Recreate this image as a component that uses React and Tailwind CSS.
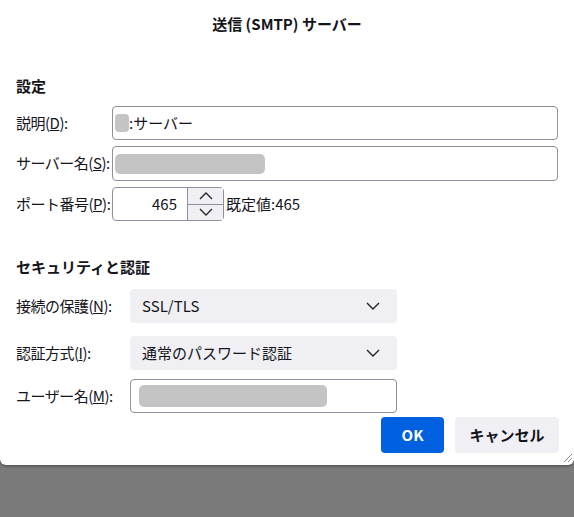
const F = { fontFamily: '"Noto Sans CJK JP", "Noto Sans", sans-serif' };
const Chev = () => (
  <svg width="14" height="8" viewBox="0 0 14 8"><path d="M1 1l6 6 6-6" fill="none" stroke="#222" strokeWidth="1.4" /></svg>
);
const Sel = ({ t }) => (
  <div className="h-[34px] w-[267px] rounded bg-[#f0f0f4] flex items-center justify-between pl-[12px] pr-[17px]">
    <span>{t}</span><Chev />
  </div>
);
export default function App() {
  return (
    <div style={F} className="w-[574px] h-[517px] bg-[#7a7a7a] text-[15px] text-[#15141a] relative overflow-hidden">
      <div className="bg-white h-[465px] rounded-b-[6px] shadow-[0_1px_3px_rgba(0,0,0,0.4)] relative">
        <div className="h-[48px] flex items-center justify-center font-semibold text-[15px] pt-[1px]">送信 (SMTP) サーバー</div>
        <div className="px-[16px]">
          <div className="font-semibold mt-[27px] h-[22px] leading-[22px]">設定</div>
          <div className="flex items-center mt-[9px] h-[34px]">
            <span className="w-[96px] shrink-0 whitespace-nowrap tracking-[-0.5px]">説明(<u>D</u>):</span>
            <div className="flex-1 h-[34px] border border-[#8f8f9d] rounded flex items-center pl-[2px]">
              <span className="w-[14px] h-[18px] bg-[#c4c4c4] rounded-sm"></span>
              <span>:サーバー</span>
            </div>
          </div>
          <div className="flex items-center mt-[6px] h-[35px]">
            <span className="w-[96px] shrink-0 whitespace-nowrap tracking-[-0.5px]">サーバー名(<u>S</u>):</span>
            <div className="flex-1 h-[35px] border border-[#8f8f9d] rounded flex items-center pl-[2px]">
              <span className="w-[150px] h-[20px] bg-[#c4c4c4] rounded-[5px]"></span>
            </div>
          </div>
          <div className="flex items-center mt-[6px] h-[34px]">
            <span className="w-[96px] shrink-0 whitespace-nowrap tracking-[-0.5px]">ポート番号(<u>P</u>):</span>
            <div className="w-[112px] h-[34px] border border-[#8f8f9d] rounded flex items-center">
              <span className="flex-1 text-right pr-[10px]">465</span>
              <div className="w-[36px] h-[32px] border-l border-[#8f8f9d] bg-[#f0f0f4] flex flex-col">
                <div className="flex-1 flex items-center justify-center border-b border-[#8f8f9d]"><svg width="14" height="8"><path d="M1 7l6-6 6 6" fill="none" stroke="#222" strokeWidth="1.3"/></svg></div>
                <div className="flex-1 flex items-center justify-center"><svg width="14" height="8"><path d="M1 1l6 6 6-6" fill="none" stroke="#222" strokeWidth="1.3"/></svg></div>
              </div>
            </div>
            <span className="ml-[2px] whitespace-nowrap">既定値:465</span>
          </div>
          <div className="font-semibold mt-[35px] h-[22px] leading-[22px]">セキュリティと認証</div>
          <div className="flex items-center mt-[11px]">
            <span className="w-[114px] shrink-0 whitespace-nowrap tracking-[-0.5px]">接続の保護(<u>N</u>):</span><Sel t="SSL/TLS" />
          </div>
          <div className="flex items-center mt-[13px]">
            <span className="w-[114px] shrink-0 whitespace-nowrap tracking-[-0.5px]">認証方式(<u>I</u>):</span><Sel t="通常のパスワード認証" />
          </div>
          <div className="flex items-center mt-[9px]">
            <span className="w-[114px] shrink-0 whitespace-nowrap tracking-[-0.5px]">ユーザー名(<u>M</u>):</span>
            <div className="w-[267px] h-[34px] border border-[#8f8f9d] rounded flex items-center pl-[8px]">
              <span className="w-[188px] h-[22px] bg-[#c4c4c4] rounded-[5px]"></span>
            </div>
          </div>
          <div className="flex justify-end gap-[11px] mt-[4px] mr-[-1px]">
            <div className="w-[63px] h-[36px] rounded bg-[#0061e0] text-white font-semibold flex items-center justify-center">OK</div>
            <div className="w-[104px] h-[36px] rounded bg-[#f0f0f4] font-semibold flex items-center justify-center">キャンセル</div>
          </div>
        </div>
        <svg className="absolute right-[1px] bottom-[2px]" width="10" height="10"><path d="M9 1L1 9M9 5L5 9" stroke="#888" strokeWidth="1"/></svg>
      </div>
    </div>
  );
}
